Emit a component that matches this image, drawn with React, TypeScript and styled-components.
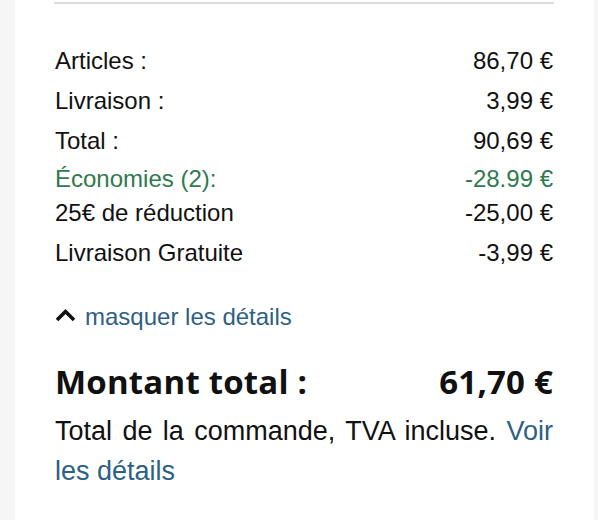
import React from "react";
import styled, { createGlobalStyle } from "styled-components";

const Global = createGlobalStyle`
  html, body { margin: 0; padding: 0; background: #f6f6f6; }
  body { font-family: "Liberation Sans", Arial, sans-serif; color: #111; }
`;

const Card = styled.div`
  margin: 0 4px 0 15px;
  background: #fff;
  height: 520px;
  padding: 2px 41px 0 40px;
  box-sizing: border-box;
`;

const Divider = styled.div`
  height: 2px;
  background: #dcdcdc;
  margin: 0 -1px 37px;
`;

const Rows = styled.div`
  display: flex;
  flex-direction: column;
`;

const Row = styled.div<{ $tone?: "green"; $h?: number }>`
  display: flex;
  justify-content: space-between;
  align-items: center;
  font-size: 24px;
  height: ${(p) => p.$h ?? 40}px;
  color: ${(p) => (p.$tone === "green" ? "#2f7a4f" : "#111")};
`;

const Toggle = styled.a`
  display: flex;
  align-items: center;
  gap: 9px;
  margin-top: 24px;
  height: 32px;
  font-size: 24px;
  color: #2e5f85;
  text-decoration: none;
`;

const Chevron = styled.svg`
  width: 21px;
  height: 14px;
  margin-bottom: 5px;
  flex: none;
`;

const Grand = styled.div`
  display: flex;
  justify-content: space-between;
  align-items: center;
  margin-top: 28px;
  height: 40px;
  font-family: "Open Sans", "Liberation Sans", Arial, sans-serif;
  font-size: 33px;
  font-weight: 700;
  letter-spacing: 0.2px;
`;

const Note = styled.p`
  margin: 10px 0 0;
  font-size: 27px;
  line-height: 40px;
  text-align: justify;
`;

const Link = styled.a`
  color: #2e5f85;
  text-decoration: none;
`;

export default function App() {
  return (
    <>
      <Global />
      <Card>
        <Divider />
        <Rows>
          <Row>
            <span>Articles :</span>
            <span>86,70 €</span>
          </Row>
          <Row>
            <span>Livraison :</span>
            <span>3,99 €</span>
          </Row>
          <Row>
            <span>Total :</span>
            <span>90,69 €</span>
          </Row>
          <Row $tone="green" $h={36}>
            <span>Économies (2):</span>
            <span>-28.99 €</span>
          </Row>
          <Row $h={32}>
            <span>25€ de réduction</span>
            <span>-25,00 €</span>
          </Row>
          <Row $h={48}>
            <span>Livraison Gratuite</span>
            <span>-3,99 €</span>
          </Row>
        </Rows>
        <Toggle href="#">
          <Chevron viewBox="0 0 21 14">
            <path d="M2 12 L10.5 3.5 L19 12" fill="none" stroke="#111" strokeWidth="3.6" strokeLinecap="butt" strokeLinejoin="miter" />
          </Chevron>
          masquer les détails
        </Toggle>
        <Grand>
          <span>Montant total :</span>
          <span>61,70 €</span>
        </Grand>
        <Note>
          Total de la commande, TVA incluse. <Link href="#">Voir les détails</Link>
        </Note>
      </Card>
    </>
  );
}
